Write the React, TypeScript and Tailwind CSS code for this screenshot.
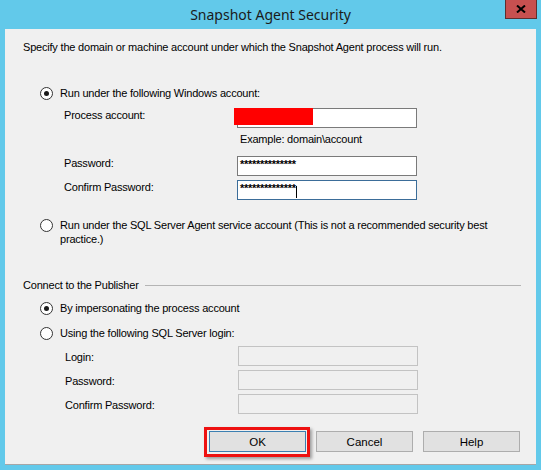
function Radio({ checked }: { checked?: boolean }) {
  return (
    <span className="w-[13px] h-[13px] shrink-0 rounded-full border border-[#333333] bg-white flex items-center justify-center">
      {checked && <span className="w-[5px] h-[5px] rounded-full bg-[#1a1a1a]" />}
    </span>
  );
}

function Field({
  label,
  children,
  labelPad,
}: {
  label: string;
  children: React.ReactNode;
  labelPad: string;
}) {
  return (
    <div className="flex items-start">
      <div className={`w-[173px] ${labelPad}`}>{label}</div>
      {children}
    </div>
  );
}

function Btn({ label, primary }: { label: string; primary?: boolean }) {
  return (
    <div
      className={`w-[97px] h-[21px] flex items-center justify-center bg-[#e1e1e1] border ${
        primary ? "border-[#3c7fb1]" : "border-[#adadad]"
      }`}
    >
      {label}
    </div>
  );
}

export default function App() {
  return (
    <div className="w-[541px] h-[470px] bg-[#62c9ea] flex flex-col font-['Liberation_Sans',Arial,sans-serif] text-black">
      {/* Title bar */}
      <div className="h-[29px] relative flex items-center justify-center">
        <span className="font-['Noto_Sans',sans-serif] text-[14px] text-[#1b1b1b]">Snapshot Agent Security</span>
        <div className="absolute right-[4px] top-0 w-[32px] h-[19px] bg-[#c75050] border border-t-0 border-[#5e2f2f] flex items-center justify-center">
          <svg width="10" height="8" viewBox="0 0 10 8">
            <path d="M1 0.5 L9 7.5 M9 0.5 L1 7.5" stroke="#000" strokeWidth="2" />
          </svg>
        </div>
      </div>

      {/* Body */}
      <div className="mx-[5px] h-[436px] bg-[#f0f0f0] border-b border-[#a6a6a6] text-[11px] leading-[14px] tracking-[-0.2px] pt-[11px]">
        <div className="pl-[18px]">
          Specify the domain or machine account under which the Snapshot Agent process will run.
        </div>

        <div className="mt-[32px] pl-[35px] flex items-center gap-[7px]">
          <Radio checked />
          <span>Run under the following Windows account:</span>
        </div>

        <div className="pl-[59px]">
          <div className="mt-[8px]">
            <Field label="Process account:" labelPad="pt-0">
              <div className="relative w-[180px] h-[20px] bg-white border border-[#7a7a7a]">
                <span className="absolute -left-[4px] -top-[1px] w-[79px] h-[17px] bg-[#ff0000]" />
              </div>
            </Field>
          </div>
          <div className="mt-[4px] pl-[176px]">Example: domain\account</div>
          <div className="mt-[10px]">
            <Field label="Password:" labelPad="pt-0">
              <div className="w-[180px] h-[20px] bg-white border border-[#7a7a7a] pl-[2px] text-[11px] leading-[14px] tracking-[-0.3px] font-bold">
                **************
              </div>
            </Field>
          </div>
          <div className="mt-[4px]">
            <Field label="Confirm Password:" labelPad="pt-0">
              <div className="w-[180px] h-[20px] bg-white border border-[#3b6d99] pl-[2px] flex items-start text-[11px] leading-[14px] tracking-[-0.3px] font-bold">
                <span>**************</span>
                <span className="w-px h-[12px] mt-[5px] bg-black" />
              </div>
            </Field>
          </div>
        </div>

        <div className="mt-[18px] pl-[35px] flex items-start gap-[7px]">
          <span className="mt-[1px]">
            <Radio />
          </span>
          <span>
            Run under the SQL Server Agent service account (This is not a recommended security best
            <br />
            practice.)
          </span>
        </div>

        <div className="mt-[32px] pl-[18px] pr-[15px] flex items-center gap-[6px]">
          <span>Connect to the Publisher</span>
          <span className="flex-1 h-px bg-[#b4b4b4]" />
        </div>

        <div className="mt-[9px] pl-[35px] flex items-center gap-[7px]">
          <Radio checked />
          <span>By impersonating the process account</span>
        </div>

        <div className="mt-[11px] pl-[35px] flex items-center gap-[7px]">
          <Radio />
          <span>Using the following SQL Server login:</span>
        </div>

        <div className="pl-[60px]">
          <div className="mt-[6px]">
            <Field label="Login:" labelPad="pt-[4px]">
              <div className="w-[180px] h-[20px] bg-[#f0f0f0] border border-[#c3c3c3]" />
            </Field>
          </div>
          <div className="mt-[4px]">
            <Field label="Password:" labelPad="pt-[4px]">
              <div className="w-[180px] h-[20px] bg-[#f0f0f0] border border-[#c3c3c3]" />
            </Field>
          </div>
          <div className="mt-[4px]">
            <Field label="Confirm Password:" labelPad="pt-[4px]">
              <div className="w-[180px] h-[20px] bg-[#f0f0f0] border border-[#c3c3c3]" />
            </Field>
          </div>
        </div>

        <div className="mt-[17px] pr-[16px] flex justify-end gap-[10px] text-[11.5px] tracking-normal">
          <div className="relative">
            <Btn label="OK" primary />
            <span className="absolute -left-[5px] -top-[4px] -right-[4px] -bottom-[5px] border-[3px] border-[#ee1111] shadow-[2px_2px_3px_rgba(0,0,0,0.35)]" />
          </div>
          <Btn label="Cancel" />
          <Btn label="Help" />
        </div>
      </div>
    </div>
  );
}
